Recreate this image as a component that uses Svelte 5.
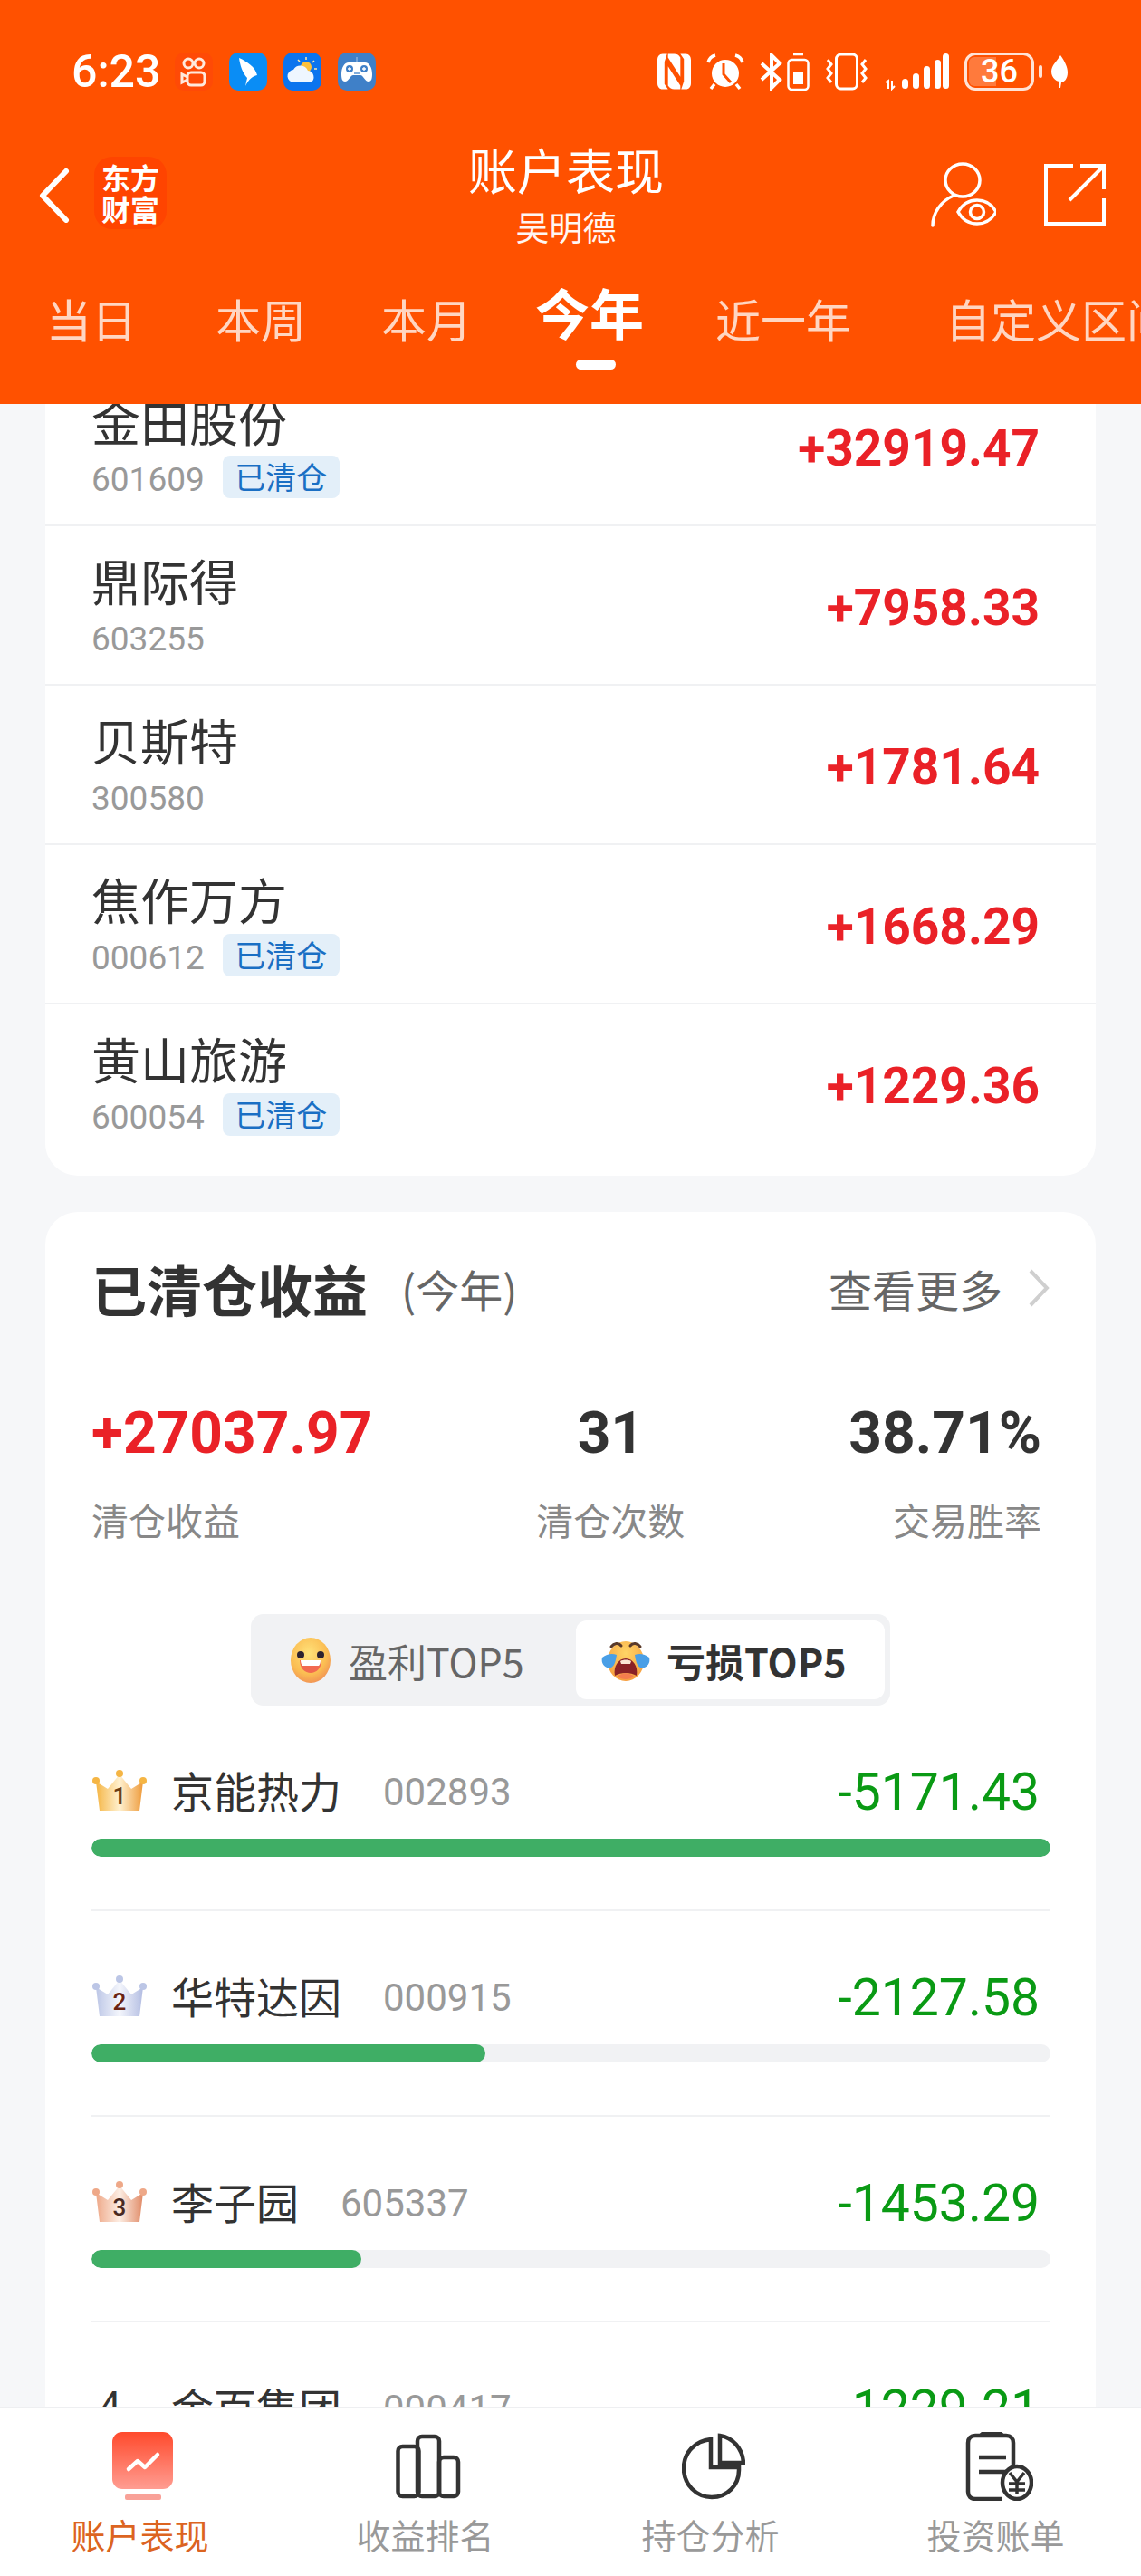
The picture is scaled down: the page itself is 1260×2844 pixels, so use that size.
<script>
  const periods = [
    { label: "当日", gap: 0 },
    { label: "本周", gap: 87 },
    { label: "本月", gap: 83 },
    { label: "今年", gap: 70, active: true },
    { label: "近一年", gap: 79 },
    { label: "自定义区间", gap: 104 },
  ];

  const holdings = [
    { name: "金田股份", code: "601609", value: "+32919.47", cleared: true },
    { name: "鼎际得", code: "603255", value: "+7958.33" },
    { name: "贝斯特", code: "300580", value: "+1781.64" },
    { name: "焦作万方", code: "000612", value: "+1668.29", cleared: true },
    { name: "黄山旅游", code: "600054", value: "+1229.36", cleared: true },
  ];

  const crowns = {
    1: { a: "#f5b544", b: "#fff1d0", c: "#ee9a3a", ink: "#6b3d12" },
    2: { a: "#bcc6e6", b: "#f4f6fc", c: "#b3bde2", ink: "#6a2413" },
    3: { a: "#eea888", b: "#fdeee4", c: "#e08a66", ink: "#4a2a22" },
  };

  const losers = [
    { rank: 1, name: "京能热力", code: "002893", value: "-5171.43", pct: 100 },
    { rank: 2, name: "华特达因", code: "000915", value: "-2127.58", pct: 41.1 },
    { rank: 3, name: "李子园", code: "605337", value: "-1453.29", pct: 28.1 },
    { rank: 4, name: "金百集团", code: "000417", value: "-1229.21", pct: 23.8 },
  ];
</script>

<div class="screen">
  <header class="top">
    <div class="status">
      <span class="time">6:23</span>
      <svg class="note" viewBox="0 0 42 42" width="42" height="42">
        <rect width="42" height="42" rx="10" fill="#ff4a06" />
        <g fill="none" stroke="#ffe9dc" stroke-width="3">
          <circle cx="15" cy="12" r="5" />
          <circle cx="27" cy="12" r="5" />
          <rect x="14" y="22" width="19" height="14" rx="4" />
          <path d="M14 27l-6-3v9l6-3" />
        </g>
      </svg>
      <svg class="note" viewBox="0 0 42 42" width="42" height="42">
        <rect width="42" height="42" rx="10" fill="#0a8df5" />
        <path d="M11 6c9 4 18 10 20 19-5 1-9 4-13 12l2-9c-5-5-8-14-9-22z" fill="#fff" />
      </svg>
      <svg class="note" viewBox="0 0 42 42" width="42" height="42">
        <rect width="42" height="42" rx="10" fill="#0b74ee" />
        <circle cx="25" cy="16" r="6" fill="#fdc13c" />
        <path d="M25 5v3M34 9l-2 2M37 18h-3M16 8l2 2" stroke="#ffe9a8" stroke-width="1.500" />
        <path d="M12 33a7 7 0 0 1-1-14 9 9 0 0 1 16 1 7 7 0 0 1 3 13z" fill="#eef6ff" />
      </svg>
      <svg class="note" viewBox="0 0 42 42" width="42" height="42">
        <rect width="42" height="42" rx="10" fill="#3f80c8" />
        <path d="M21 5v6" stroke="#a8c8ea" stroke-width="1" />
        <path d="M12 11h18c5 0 8 6 8 13 0 5-1 8-4 8-4 0-6-7-9-7h-8c-3 0-5 7-9 7-3 0-4-3-4-8 0-7 3-13 8-13z" fill="#fff" />
        <circle cx="13" cy="18" r="4" fill="#3f80c8" />
        <circle cx="29" cy="18" r="4" fill="#3f80c8" />
        <path d="M11 18h4M13 16v4M27 18h4M29 16v4" stroke="#fff" stroke-width="1.300" />
        <path d="M18 23h6" stroke="#3f80c8" stroke-width="1.300" />
      </svg>

      <div class="status-right">
        <svg viewBox="0 0 38 40" width="37" height="40" fill="#fff">
          <path d="M11 0H6C2 0 0 3 0 7v26c0 4 2 7 6 7h6L8 34V9zM27 40h5c4 0 6-3 6-7V7c0-4-2-7-6-7h-6l4 6v25z" />
          <path d="M12 0h7c3 0 5 1 7 4v22L12 4zM26 40h-7c-3 0-5-1-7-4V14l14 22z" />
        </svg>
        <svg viewBox="0 0 42 42" width="42" height="42" fill="#fff">
          <circle cx="21" cy="23" r="15" />
          <path d="M19 12v12l8 9" stroke="#ff5100" stroke-width="3" fill="none" />
          <path d="M2 11c1-4 4-7 8-8M40 11c-1-4-4-7-8-8M9 35l-4 5M33 35l4 5" stroke="#fff" stroke-width="3.500" fill="none" />
        </svg>
        <svg viewBox="0 0 25 42" width="25" height="42" fill="none" stroke="#fff" stroke-width="4">
          <path d="M2 12l20 18-9 9V3l9 9L2 30" />
        </svg>
        <svg class="small-cell" viewBox="0 0 25 42" width="25" height="42" fill="none" stroke="#fff" stroke-width="2.500">
          <path d="M7 2h11" />
          <rect x="1.500" y="8" width="22" height="33" rx="4" />
          <rect x="7" y="21" width="11" height="14" fill="#fff" stroke="none" />
        </svg>
        <svg viewBox="0 0 48 42" width="48" height="42" fill="none" stroke="#fff" stroke-width="3">
          <rect x="12.500" y="2" width="23" height="38" rx="5" />
          <path d="M3 8l4 5-4 5 4 5-4 5 4 5M45 8l-4 5 4 5-4 5 4 5-4 5" />
        </svg>
        <svg viewBox="0 0 72 42" width="72" height="42" fill="#fff">
          <path d="M2 33l3-2v9M9 31v9l3-3" stroke="#fff" stroke-width="2" fill="none" />
          <rect x="20" y="29" width="7" height="11" rx="3.500" />
          <rect x="32" y="23" width="7" height="17" rx="3.500" />
          <rect x="44" y="15" width="7" height="25" rx="3.500" />
          <rect x="56" y="8" width="7" height="32" rx="3.500" />
          <rect x="65" y="1" width="7" height="39" rx="3.500" />
        </svg>
        <div class="battery"><span class="fill"></span><span class="pct">36</span></div>
        <span class="nub"></span>
        <svg class="leaf" viewBox="0 0 20 36" width="20" height="36">
          <path d="M11 0c5 7 8 13 8 19 0 7-4 11-7 11l-1 6H9l1-7c-2 0-9-3-9-11C1 11 7 7 11 0z" fill="#fff" />
        </svg>
      </div>
    </div>

    <div class="nav">
      <svg class="back" viewBox="0 0 34 60" width="34" height="60">
        <path d="M30 3L4 30l26 27" fill="none" stroke="#fff" stroke-width="6" stroke-linecap="round" stroke-linejoin="round" />
      </svg>
      <div class="logo">东方<br />财富</div>
      <div class="titles">
        <div class="title">账户表现</div>
        <div class="subtitle">吴明德</div>
      </div>
      <svg class="person" viewBox="0 0 72 72" width="72" height="72" fill="none" stroke="#fff" stroke-width="3.500">
        <ellipse cx="35" cy="20" rx="19" ry="18" />
        <path d="M2 70c0-14 9-27 23-33" stroke-linecap="round" />
        <path d="M30 55c5-9 13-13 21-13s16 4 21 13c-5 9-13 13-21 13s-16-4-21-13z" />
        <circle cx="51" cy="55" r="7.500" />
      </svg>
      <svg class="share" viewBox="0 0 68 68" width="68" height="68" fill="none" stroke="#fff" stroke-width="4">
        <path d="M32 2H2v64h64V38" />
        <path d="M28 40L66 2M40 2h26v26" />
      </svg>
    </div>

    <nav class="periods">
      {#each periods as p}
        <span class="period" class:active={p.active} style="margin-left: {p.gap}px">{p.label}</span>
      {/each}
    </nav>
  </header>

  <main class="scroll">
    <section class="card holdings">
      {#each holdings as h}
        <div class="holding">
          <div class="stock">
            <div class="stock-name">{h.name}</div>
            <div class="stock-meta">
              <span class="stock-code">{h.code}</span>
              {#if h.cleared}<span class="tag">已清仓</span>{/if}
            </div>
          </div>
          <div class="profit">{h.value}</div>
        </div>
      {/each}
    </section>

    <section class="card cleared">
      <div class="card-head">
        <h2>已清仓收益</h2>
        <span class="range">(今年)</span>
        <span class="more">查看更多</span>
        <svg class="more-arrow" viewBox="0 0 24 46" width="24" height="46">
          <path d="M3 4l18 19L3 42" fill="none" stroke="#cfcfcf" stroke-width="4" />
        </svg>
      </div>

      <div class="stats">
        <div class="stat">
          <div class="stat-value up">+27037.97</div>
          <div class="stat-label">清仓收益</div>
        </div>
        <div class="stat mid">
          <div class="stat-value">31</div>
          <div class="stat-label">清仓次数</div>
        </div>
        <div class="stat end">
          <div class="stat-value">38.71%</div>
          <div class="stat-label">交易胜率</div>
        </div>
      </div>

      <div class="segment">
        <div class="seg-item">
          <svg viewBox="0 0 44 50" width="44" height="50">
            <defs>
              <radialGradient id="smile" cx="0.45" cy="0.35" r="0.7">
                <stop offset="0" stop-color="#ffe27a" />
                <stop offset="0.65" stop-color="#fbbd52" />
                <stop offset="1" stop-color="#f08d55" />
              </radialGradient>
            </defs>
            <ellipse cx="22" cy="25" rx="22" ry="25" fill="url(#smile)" />
            <circle cx="11" cy="19" r="4" fill="#2d2230" />
            <circle cx="33" cy="19" r="4" fill="#2d2230" />
            <path d="M10 25h24c0 9-6 14-12 14s-12-5-12-14z" fill="#f26a50" />
            <path d="M11 25h22c0 3-1 5-2 6H13c-1-1-2-3-2-6z" fill="#fff" />
          </svg>
          <span>盈利TOP5</span>
        </div>
        <div class="seg-item on">
          <svg viewBox="0 0 54 46" width="54" height="46">
            <defs>
              <radialGradient id="cry" cx="0.5" cy="0.3" r="0.75">
                <stop offset="0" stop-color="#ffd566" />
                <stop offset="1" stop-color="#f59a3c" />
              </radialGradient>
            </defs>
            <ellipse cx="27" cy="24" rx="20" ry="22" fill="url(#cry)" />
            <path d="M11 8c3-4 8-5 11-1M43 8c-3-4-8-5-11-1" fill="none" stroke="#5a3a2a" stroke-width="3" stroke-linecap="round" />
            <path d="M1 20c5-4 11-5 16-3-1 6-2 12-6 14-5 2-12-3-10-11zM53 20c-5-4-11-5-16-3 1 6 2 12 6 14 5 2 12-3 10-11z" fill="#4a9fe6" />
            <path d="M15 40c-2-10 4-19 12-19s14 9 12 19c-7-4-17-4-24 0z" fill="#8a2226" />
            <path d="M18 41c5-5 13-5 18 0-5 4-13 4-18 0z" fill="#f47d4e" />
            <path d="M21 24c3-2 9-2 12 0l-1 3H22z" fill="#fbe7d4" />
          </svg>
          <span>亏损TOP5</span>
        </div>
      </div>

      <div class="rank-list">
        {#each losers as r}
          <div class="rank">
            <div class="rank-line">
              <div class="rank-left">
                {#if crowns[r.rank]}
                  <svg class="crown" viewBox="0 0 60 46" width="60" height="46">
                    <defs>
                      <linearGradient id="crown{r.rank}">
                        <stop offset="0" stop-color={crowns[r.rank].a} />
                        <stop offset="0.5" stop-color={crowns[r.rank].b} />
                        <stop offset="1" stop-color={crowns[r.rank].c} />
                      </linearGradient>
                    </defs>
                    <path d="M8 46L4 14l13 8L30 6l13 16 13-8-4 32z" fill="url(#crown{r.rank})" />
                    <circle cx="4" cy="13" r="4" fill={crowns[r.rank].a} />
                    <circle cx="30" cy="5" r="4" fill={crowns[r.rank].a} />
                    <circle cx="56" cy="13" r="4" fill={crowns[r.rank].a} />
                    <text x="30" y="39" class="crown-num" fill={crowns[r.rank].ink}>{r.rank}</text>
                  </svg>
                {:else}
                  <span class="rank-num">{r.rank}</span>
                {/if}
                <span class="rank-name">{r.name}</span>
                <span class="rank-code">{r.code}</span>
              </div>
              <span class="loss">{r.value}</span>
            </div>
            <div class="bar"><div class="bar-fill" style="width: {r.pct}%"></div></div>
          </div>
        {/each}
      </div>
    </section>
  </main>

  <footer class="tabs">
    <div class="tab current">
      <svg viewBox="0 0 68 76" width="68" height="76">
        <defs>
          <linearGradient id="tabRed" x1="0" y1="0" x2="0" y2="1">
            <stop offset="0" stop-color="#ff4a2c" />
            <stop offset="1" stop-color="#ff9d92" />
          </linearGradient>
        </defs>
        <rect width="67" height="63" rx="11" fill="url(#tabRed)" />
        <rect x="14" y="69" width="40" height="6" rx="2" fill="#f9a198" />
        <path d="M18 41l10-9 8 7 14-14" fill="none" stroke="#fff" stroke-width="4.500" stroke-linecap="round" stroke-linejoin="round" />
      </svg>
      <span>账户表现</span>
    </div>
    <div class="tab">
      <svg viewBox="0 0 72 72" width="72" height="72" fill="none" stroke="#333" stroke-width="4.500">
        <rect x="2.500" y="14" width="23" height="55" rx="5" />
        <rect x="24" y="3" width="24" height="66" rx="5" />
        <rect x="48" y="26" width="21" height="43" rx="5" />
      </svg>
      <span>收益排名</span>
    </div>
    <div class="tab">
      <svg viewBox="0 0 70 72" width="70" height="72" fill="none" stroke="#333" stroke-width="4.500">
        <path d="M32 6C14 8 2 21 2 38c0 18 14 32 31 32s30-13 30-30v-3H32z" />
        <path d="M42 2c14 2 25 14 26 30H42z" />
      </svg>
      <span>持仓分析</span>
    </div>
    <div class="tab">
      <svg viewBox="0 0 76 76" width="76" height="76" fill="none" stroke="#333" stroke-width="4.500">
        <path d="M54 50V12c0-5-3-8-8-8H12c-5 0-8 3-8 8v54c0 5 3 8 8 8h30" />
        <path d="M18 4c2-3 4-3 6-3h12c2 0 4 0 6 3" fill="#333" />
        <path d="M16 28h30M16 44h30" />
        <ellipse cx="58" cy="56" rx="16" ry="18" fill="#fff" />
        <path d="M50 45l8 10 8-10M49 57h18M49 64h18M58 55v14" stroke-width="3.500" />
      </svg>
      <span>投资账单</span>
    </div>
  </footer>
</div>

<style>
  :global(body) {
    margin: 0;
    background: #f6f7f9;
  }

  .screen {
    width: 1260px;
    height: 2844px;
    display: flex;
    flex-direction: column;
    overflow: hidden;
    background: #f6f7f9;
    color: #333;
    font-family: "Noto Sans CJK SC", "Noto Sans", sans-serif;
  }

  .top {
    height: 446px;
    flex: none;
    background: #ff5100;
    color: #fff;
    overflow: hidden;
  }

  .status {
    height: 58px;
    padding: 50px 0 0 79px;
    display: flex;
    align-items: center;
    gap: 18px;
  }

  .time {
    width: 96px;
    font: 500 50px/58px Roboto, sans-serif;
  }

  .status-right {
    margin-left: auto;
    padding-right: 80px;
    display: flex;
    align-items: center;
    gap: 17px;
  }

  .small-cell {
    margin-left: -12px;
  }

  .battery {
    position: relative;
    width: 77px;
    height: 42px;
    box-sizing: border-box;
    border: 3px solid #ffe3d6;
    border-radius: 12px;
    overflow: hidden;
    text-align: center;
  }

  .battery .fill {
    position: absolute;
    left: 2px;
    top: 2px;
    bottom: 2px;
    width: 30px;
    border-radius: 6px 0 0 6px;
    background: #ff7a3c;
  }

  .battery .pct {
    position: relative;
    font: 500 36px/36px Roboto, sans-serif;
  }

  .nub {
    width: 4px;
    height: 14px;
    margin-left: -12px;
    background: #ffe3d6;
    border-radius: 2px;
  }

  .leaf {
    margin-left: -8px;
  }

  .nav {
    height: 122px;
    margin-top: 44px;
    padding: 0 39px 0 43px;
    display: flex;
    align-items: center;
    position: relative;
  }

  .back {
    flex: none;
    margin-top: 6px;
  }

  .logo {
    flex: none;
    width: 80px;
    height: 80px;
    margin: 0 0 0 27px;
    border-radius: 20px;
    background: #ff4400;
    font: 700 32px/35px "Noto Sans CJK SC", sans-serif;
    text-align: center;
    padding-top: 5px;
    box-sizing: border-box;
  }

  .titles {
    position: absolute;
    left: 200px;
    right: 210px;
    top: 0;
    text-align: center;
  }

  .title {
    font-size: 54px;
    line-height: 70px;
  }

  .subtitle {
    font-size: 37px;
    line-height: 50px;
    margin-top: 3px;
    opacity: 0.95;
  }

  .person {
    margin-left: auto;
    margin-top: 4px;
  }

  .share {
    margin: 4px 0 0 53px;
  }

  .periods {
    height: 100px;
    margin-top: 27px;
    padding-left: 51px;
    display: flex;
    align-items: center;
    white-space: nowrap;
  }

  .period {
    font-size: 50px;
    line-height: 70px;
    color: #ffd6c2;
    flex: none;
  }

  .period.active {
    position: relative;
    color: #fff;
    font-size: 60px;
    font-weight: 700;
    top: -7px;
  }

  .period.active::after {
    content: "";
    position: absolute;
    left: 45px;
    top: 88px;
    width: 44px;
    height: 11px;
    border-radius: 6px;
    background: #fff;
  }

  .scroll {
    flex: 1;
    min-height: 0;
    overflow: hidden;
    padding: 0 50px;
  }

  .card {
    background: #fff;
    border-radius: 36px;
  }

  /* list is scrolled, first row runs under the header */
  .holdings {
    margin-top: -41px;
    padding-bottom: 15px;
  }

  .holding {
    height: 174px;
    padding: 0 62px 0 51px;
    display: flex;
    align-items: center;
    justify-content: space-between;
    border-bottom: 2px solid #f0f1f3;
  }

  .holding:last-child {
    border-bottom: 0;
  }

  .stock {
    margin-top: 3px;
  }

  .stock-name {
    font-size: 54px;
    line-height: 64px;
    color: #333;
  }

  .stock-meta {
    display: flex;
    align-items: center;
    height: 50px;
    margin-top: 8px;
  }

  .stock-code {
    font: 37px/50px Roboto, sans-serif;
    color: #999;
  }

  .tag {
    margin: 0 0 6px 20px;
    width: 129px;
    height: 47px;
    border-radius: 8px;
    background: #e3eff9;
    color: #1a6fc4;
    font-size: 34px;
    line-height: 45px;
    text-align: center;
  }

  .profit {
    margin-top: 5px;
    font: 700 55px/60px Roboto, sans-serif;
    color: #ea2127;
  }

  .cleared {
    margin-top: 40px;
    padding: 0 50px 0 51px;
  }

  .card-head {
    height: 168px;
    display: flex;
    align-items: center;
  }

  .card-head h2 {
    margin: 0;
    font-size: 61px;
    font-weight: 700;
    color: #333;
  }

  .range {
    margin-left: 37px;
    font-size: 48px;
    color: #666;
  }

  .more {
    margin-left: auto;
    font-size: 48px;
    color: #666;
  }

  .more-arrow {
    margin-left: 28px;
    margin-right: 1px;
  }

  .stats {
    margin-top: 37px;
    padding-right: 10px;
    display: flex;
    justify-content: space-between;
  }

  .stat-value {
    font: 700 64px/80px Roboto, sans-serif;
    color: #333;
  }

  .stat-value.up {
    color: #ea2127;
  }

  .stat-label {
    margin-top: 26px;
    font-size: 41px;
    line-height: 56px;
    color: #888;
  }

  .stat.mid {
    text-align: center;
  }

  .stat.end {
    text-align: right;
  }

  .segment {
    width: 706px;
    height: 101px;
    margin: 77px 0 0 176px;
    padding: 7px 6px;
    box-sizing: border-box;
    display: flex;
    align-items: stretch;
    justify-content: space-between;
    border-radius: 14px;
    background: #f1f2f4;
  }

  .seg-item {
    display: flex;
    align-items: center;
    gap: 20px;
    padding-left: 38px;
    font-size: 43px;
    color: #666;
  }

  .seg-item.on {
    width: 341px;
    box-sizing: border-box;
    padding-left: 28px;
    gap: 18px;
    border-radius: 12px;
    background: #fff;
    color: #333;
    font-weight: 700;
  }

  .rank {
    height: 227px;
    box-sizing: border-box;
    padding-top: 50px;
    border-bottom: 2px solid #f0f1f3;
  }

  .rank-line {
    height: 85px;
    display: flex;
    align-items: center;
    justify-content: space-between;
  }

  .rank-left {
    display: flex;
    align-items: center;
  }

  .crown {
    flex: none;
    width: 62px;
  }

  .crown-num {
    font: 500 26px Roboto, sans-serif;
    text-anchor: middle;
  }

  .rank-num {
    width: 54px;
    padding-left: 8px;
    font: 44px Roboto, sans-serif;
    color: #333;
  }

  .rank-name {
    margin-left: 26px;
    font-size: 47px;
    color: #333;
  }

  .rank-code {
    margin: 5px 0 0 46px;
    font: 42px Roboto, sans-serif;
    color: #999;
  }

  .loss {
    font: 57px/70px Roboto, sans-serif;
    color: #0a9a14;
    margin: 6px 12px 0 0;
  }

  .bar {
    height: 20px;
    margin-top: 12px;
    border-radius: 10px;
    background: #f1f2f4;
    overflow: hidden;
  }

  .bar-fill {
    height: 100%;
    border-radius: 10px;
    background: #3fae65;
  }

  .tabs {
    height: 187px;
    flex: none;
    box-sizing: border-box;
    display: grid;
    grid-template-columns: repeat(4, 315px);
    border-top: 2px solid #eeeff1;
    background: #fff;
  }

  .tab {
    display: flex;
    flex-direction: column;
    align-items: center;
    padding-top: 26px;
    font-size: 38px;
    line-height: 54px;
    color: #999;
  }

  .tab svg {
    height: 76px;
    margin-bottom: 10px;
  }

  .tab span {
    margin-right: 6px;
  }

  .tab.current {
    color: #dc6421;
  }
</style>
